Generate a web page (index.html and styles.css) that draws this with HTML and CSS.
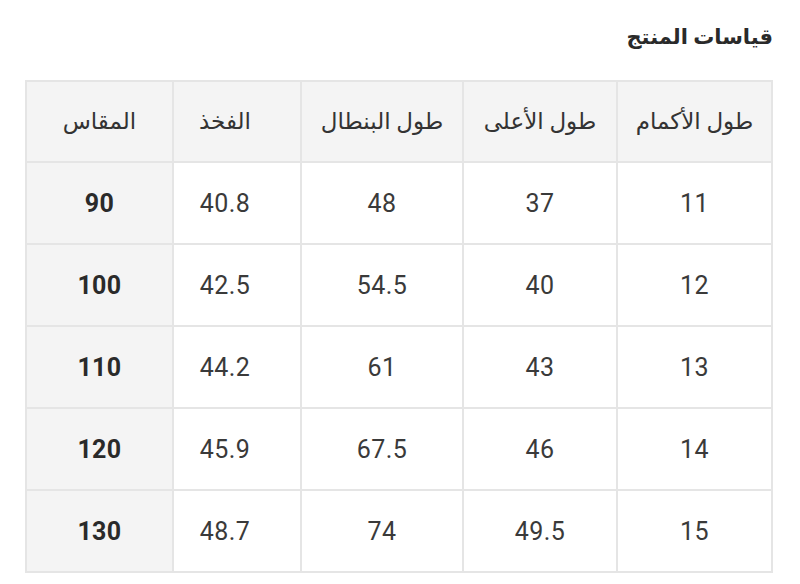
FILE: index.html
```html
<!DOCTYPE html>
<html lang="ar" dir="rtl">
<head>
<meta charset="utf-8">
<link rel="stylesheet" href="styles.css">
</head>
<body>
<div class="page">
  <h2 class="title">قياسات المنتج</h2>
  <table class="sizes">
    <colgroup>
      <col class="c1"><col class="c2"><col class="c3"><col class="c4"><col class="c5">
    </colgroup>
    <thead>
      <tr><th>طول الأكمام</th><th>طول الأعلى</th><th>طول البنطال</th><th>الفخذ</th><th>المقاس</th></tr>
    </thead>
    <tbody>
      <tr><td>11</td><td>37</td><td>48</td><td>40.8</td><td class="size">90</td></tr>
      <tr><td>12</td><td>40</td><td>54.5</td><td>42.5</td><td class="size">100</td></tr>
      <tr><td>13</td><td>43</td><td>61</td><td>44.2</td><td class="size">110</td></tr>
      <tr><td>14</td><td>46</td><td>67.5</td><td>45.9</td><td class="size">120</td></tr>
      <tr><td>15</td><td>49.5</td><td>74</td><td>48.7</td><td class="size">130</td></tr>
    </tbody>
  </table>
</div>
</body>
</html>
```
FILE: styles.css
```css
html, body {
  margin: 0;
  padding: 0;
  background: #ffffff;
}
body {
  font-family: Roboto, "DejaVu Sans", sans-serif;
  color: #333333;
}
.page {
  padding: 19px 27px 0 27px;
}
.title {
  margin: 0 0 25px 0;
  font-size: 21px;
  font-weight: 700;
  line-height: 36px;
  color: #2a2a2a;
}
.sizes {
  width: 746px;
  border-collapse: collapse;
  table-layout: fixed;
}
.c1 { width: 155px; }
.c2 { width: 154px; }
.c3 { width: 162px; }
.c4 { width: 128px; }
.c5 { width: 147px; }
.sizes th,
.sizes td {
  border: 2px solid #e5e5e5;
  height: 80px;
  padding: 0;
  text-align: center;
  font-size: 25px;
  letter-spacing: 0.4px;
  color: #3a3a3a;
}
.sizes th:nth-child(4),
.sizes td:nth-child(4) {
  padding-right: 24px;
}
.sizes th {
  height: 79px;
  background: #f4f4f4;
  font-weight: 400;
  font-size: 23px;
  letter-spacing: 0;
  color: #333333;
}
.sizes td.size {
  background: #f4f4f4;
  font-weight: 700;
  color: #2a2a2a;
}
```
